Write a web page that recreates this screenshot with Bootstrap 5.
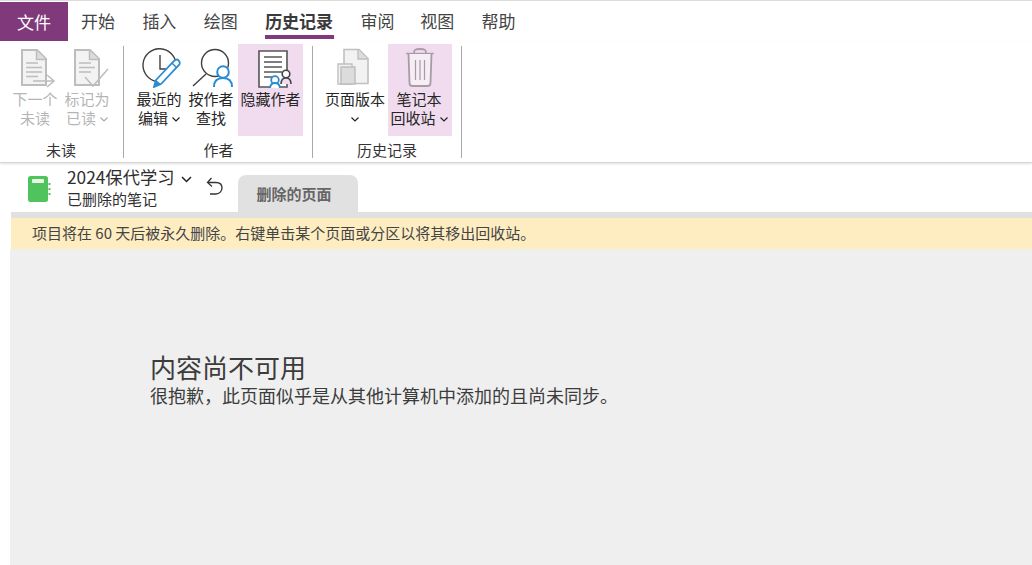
<!DOCTYPE html>
<html lang="zh">
<head>
<meta charset="utf-8">
<title>OneNote</title>
<link href="https://cdn.jsdelivr.net/npm/bootstrap@5.3.0/dist/css/bootstrap.min.css" rel="stylesheet">
<style>
html,body{height:565px;overflow:hidden}
body{font-family:"Noto Sans CJK SC",sans-serif;background:#fff;color:#262626;font-size:15px;width:1032px}
.app-shell{height:565px;border-top:1px solid #dcdcdc;padding-top:1px}
.tabrow{height:39px}
.file-tab{width:68px;height:39px;background:#80397b;color:#fff;font-size:17px}
.menu-tab{font-size:17px;color:#444;height:39px;margin-left:13.7px;margin-right:13.7px;position:relative;line-height:38px}
.menu-tab.on{font-weight:700;color:#3a3a3a}
.menu-tab.on::after{content:"";position:absolute;left:0;right:-1px;bottom:2px;height:4px;background:#80397b}
.first-tab{margin-left:13px}
.tight-tab{margin-right:12px}
.ribbon{height:122px;border-bottom:1px solid #d6d6d6;box-shadow:0 1px 2px rgba(0,0,0,.12);position:relative;padding-left:11px}
.rgroup{height:121px;display:flex;flex-direction:column;padding-top:3px}
.ritems{display:flex;height:92px}
.rlabel{font-family:"Liberation Sans","Noto Sans CJK SC",sans-serif;font-size:15px;text-align:center;margin-top:5px;line-height:20px;color:#333}
.rlabel.shift-l{margin-right:2px}
.ritem{font-family:"Liberation Sans","Noto Sans CJK SC",sans-serif;display:flex;flex-direction:column;align-items:center;font-size:15px;line-height:18.5px;color:#262626;text-align:center;white-space:nowrap}
.ritem.nudge span{margin-right:2px}
.ritem svg{display:block;margin-top:4px;margin-bottom:3px;height:40px}
.ritem svg.chev{display:inline-block;height:5px;margin:0 0 0 4px;vertical-align:middle}
.ritem svg.chev.solo{margin-left:0}
.ritem.off{color:#b5b5b5}
.ritem.hl{background:#f0dcee}
.rsep{width:1px;height:112px;background:#a9a9a9;margin-top:5px}
.nbbar{height:49px;position:relative}
.nbicon{margin-left:28px;margin-top:13px}
.nbtext{margin-left:16px;margin-top:1px;width:130px}
.nbtitle{font-size:17.300px;line-height:25px;color:#2e2e2e;white-space:nowrap}
.nbchev{margin-left:6px}
.nbsub{font-size:15px;line-height:20px;color:#2e2e2e;white-space:nowrap}
.backbtn{margin-left:9px;margin-top:14px}
.pgtab{margin-left:14px;margin-top:12px;width:120px;height:37px;padding-right:8px;background:#e1e1e1;border-radius:8px 8px 0 0;font-weight:700;font-size:15px;color:#666;text-align:center;line-height:37px}
.strip{height:6px;background:#e1e1e1;margin-left:11px}
.notice{height:31px;background:#ffedc2;margin-left:11px;padding-left:21px;line-height:30px;font-size:15px;color:#444;white-space:nowrap}
.emptyarea{height:316px;background:#efefef;margin-left:10px;padding-left:141px;padding-top:101px}
.emptyhead{font-size:26px;line-height:34px;color:#3c3c3c;margin-left:-1px}
.emptysub{font-size:18px;line-height:22px;color:#3c3c3c;margin-left:-1px;white-space:nowrap}
.w-a{width:50px}.w-b{width:52px}.w-c{width:65px}.w-d{width:64px}
.m10{margin-left:10px}.m9{margin-left:9px}.m11{margin-left:11px}
.docnudge{margin-right:6px}
</style>
</head>
<body>
<div class="app-shell">
  <div class="tabrow d-flex">
    <div class="file-tab d-flex align-items-center justify-content-center">文件</div>
    <div class="menu-tab first-tab">开始</div>
    <div class="menu-tab">插入</div>
    <div class="menu-tab">绘图</div>
    <div class="menu-tab on">历史记录</div>
    <div class="menu-tab tight-tab">审阅</div>
    <div class="menu-tab">视图</div>
    <div class="menu-tab">帮助</div>
  </div>
  <div class="ribbon d-flex">
    <div class="rgroup">
      <div class="ritems">
        <div class="ritem off w-a nudge">
          <svg width="40" height="40" viewBox="0 0 40 40" fill="none"><path d="M6 2h15l9 9v26H6z" fill="#f3f3f3" stroke="#bdbdbd" stroke-width="2"/><path d="M20.500 2.500v9h9.500" fill="#ddd" stroke="#bdbdbd" stroke-width="1.500"/><path d="M10 15h12M10 19.500h16M10 24h16M10 28.500h12" stroke="#bdbdbd" stroke-width="1.600"/><path d="M17 33h20M31 27l7 6-7 6" stroke="#bdbdbd" stroke-width="1.500" fill="#fff"/></svg>
          <span>下一个</span><span>未读</span>
        </div>
        <div class="ritem off w-b">
          <svg class="ms-1" width="40" height="40" viewBox="0 0 40 40" fill="none"><path d="M6 2h15l9 9v26H6z" fill="#f3f3f3" stroke="#bdbdbd" stroke-width="2"/><path d="M20.500 2.500v9h9.500" fill="#ddd" stroke="#bdbdbd" stroke-width="1.500"/><path d="M10 15h12M10 19.500h16M10 24h12" stroke="#bdbdbd" stroke-width="1.600"/><path d="M16 29l8 9L39 21" stroke="#bdbdbd" stroke-width="1.500" fill="none"/></svg>
          <span>标记为</span><span>已读<svg class="chev" width="8" height="5" viewBox="0 0 8 5"><path d="M.5.5 4 4 7.500.5" fill="none" stroke="#aaa" stroke-width="1.200"/></svg></span>
        </div>
      </div>
      <div class="rlabel shift-l">未读</div>
    </div>
    <div class="rsep m10"></div>
    <div class="rgroup m10">
      <div class="ritems">
        <div class="ritem w-b nudge">
          <svg class="ms-1" width="42" height="40" viewBox="0 0 42 40" fill="none"><path d="M16 33.500A16.500 16.500 0 1 1 35 17" stroke="#404040" stroke-width="1.400"/><path d="M19 7v14h7" stroke="#404040" stroke-width="1.400"/><path d="M15 32l18-19c2-2 4-2 5 0 1 1 1 3 0 4L20 36l-7 3z" fill="#fff" stroke="#2a8dd4" stroke-width="1.800"/><path d="M15 32l5 4-7 3z" fill="#2a8dd4"/><path d="M31 15l5 5" stroke="#2a8dd4" stroke-width="1.500"/></svg>
          <span>最近的</span><span>编辑<svg class="chev" width="8" height="5" viewBox="0 0 8 5"><path d="M.5.5 4 4 7.500.5" fill="none" stroke="#222" stroke-width="1.200"/></svg></span>
        </div>
        <div class="ritem w-b nudge">
          <svg width="42" height="40" viewBox="0 0 42 40" fill="none"><circle cx="24" cy="15" r="13.500" stroke="#404040" stroke-width="1.400"/><path d="M15 26 2 38" stroke="#404040" stroke-width="1.400"/><circle cx="32" cy="24" r="5.800" fill="#fff" stroke="#2a8dd4" stroke-width="2"/><path d="M23 39c0-6 3-9 9-9s9 3 9 9" fill="#fff" stroke="#2a8dd4" stroke-width="2"/></svg>
          <span>按作者</span><span>查找</span>
        </div>
        <div class="ritem hl w-c">
          <svg class="ms-2" width="36" height="40" viewBox="0 0 36 40" fill="none"><path d="M2 3h28v36H2z" fill="#fff" stroke="#555" stroke-width="1.600"/><path d="M7 9h18M7 14h18M7 19h18M7 24h18M7 29h9" stroke="#555" stroke-width="1.500"/><circle cx="29" cy="26" r="3.800" fill="#fff" stroke="#444" stroke-width="1.600"/><path d="M24 36c0-4 1.500-6 5-6s5 2 5 6" fill="#f0dcee" stroke="#444" stroke-width="1.600"/><circle cx="18" cy="32" r="3.800" fill="#fff" stroke="#2a8dd4" stroke-width="1.800"/><path d="M13 41c0-4 1.500-6 5-6s5 2 5 6" fill="#fff" stroke="#2a8dd4" stroke-width="1.800"/></svg>
          <span>隐藏作者</span>
        </div>
      </div>
      <div class="rlabel">作者</div>
    </div>
    <div class="rsep m9"></div>
    <div class="rgroup m11">
      <div class="ritems">
        <div class="ritem w-d nudge">
          <svg class="docnudge" width="32" height="40" viewBox="0 0 32 40" fill="none"><path d="M7 1.500h15l9 9v25H7z" fill="#f2f2f2" stroke="#c0c0c0" stroke-width="1.600"/><path d="M21 2v9h10" fill="#ddd" stroke="#c0c0c0" stroke-width="1.400"/><path d="M1 16h14v20H1z" fill="#f2f2f2" stroke="#c0c0c0" stroke-width="1.400"/><path d="M4 19h14v17H4z" fill="#dcdcdc" stroke="#bdbdbd" stroke-width="1.400"/></svg>
          <span>页面版本</span><span><svg class="chev solo" width="8" height="5" viewBox="0 0 8 5"><path d="M.5.5 4 4 7.500.5" fill="none" stroke="#222" stroke-width="1.200"/></svg></span>
        </div>
        <div class="ritem hl w-d nudge">
          <svg width="30" height="40" viewBox="0 0 30 40" fill="none"><path d="M1 5.500h28" stroke="#a89ba6" stroke-width="1.400"/><path d="M9 5c0-3 1-4 6-4s6 1 6 4" stroke="#a89ba6" stroke-width="1.800"/><path d="M3.500 6l1 29c0 2 1 3 3 3h15c2 0 3-1 3-3l1-29" fill="#f6edf5" stroke="#a89ba6" stroke-width="1.800"/><path d="M10.500 12v20M15 12v20M19.500 12v20" stroke="#a89ba6" stroke-width="1.200"/></svg>
          <span>笔记本</span><span>回收站<svg class="chev" width="8" height="5" viewBox="0 0 8 5"><path d="M.5.5 4 4 7.500.5" fill="none" stroke="#222" stroke-width="1.200"/></svg></span>
        </div>
      </div>
      <div class="rlabel shift-l">历史记录</div>
    </div>
    <div class="rsep m9"></div>
  </div>
  <div class="nbbar d-flex">
    <svg class="nbicon" width="23" height="26" viewBox="0 0 23 26"><rect x="0" y="0" width="20" height="26" rx="2.500" fill="#50c35c"/><rect x="4" y="3" width="12" height="4" rx=".8" fill="#e6f7e6"/><path d="M21.500 7v2M21.500 12v2M21.500 17v2" stroke="#50c35c" stroke-width="2"/></svg>
    <div class="nbtext">
      <div class="nbtitle">2024保代学习<svg class="nbchev" width="11" height="7" viewBox="0 0 11 7"><path d="M1 1l4.500 4.500L10 1" fill="none" stroke="#222" stroke-width="1.500"/></svg></div>
      <div class="nbsub">已删除的笔记</div>
    </div>
    <svg class="backbtn" width="18" height="20" viewBox="0 0 18 20" fill="none"><path d="M5.500 1 1.500 5.500 6 9.500" stroke="#333" stroke-width="1.300"/><path d="M2 5.500h8c4 0 6 2.500 6 5.500s-2.500 6-6 6H4" stroke="#333" stroke-width="1.300"/></svg>
    <div class="pgtab">删除的页面</div>
  </div>
  <div class="strip"></div>
  <div class="notice">项目将在 60 天后被永久删除。右键单击某个页面或分区以将其移出回收站。</div>
  <div class="emptyarea">
    <div class="emptyhead">内容尚不可用</div>
    <div class="emptysub">很抱歉，此页面似乎是从其他计算机中添加的且尚未同步。</div>
  </div>
</div>
<script src="https://cdn.jsdelivr.net/npm/bootstrap@5.3.0/dist/js/bootstrap.bundle.min.js"></script>
</body>
</html>
